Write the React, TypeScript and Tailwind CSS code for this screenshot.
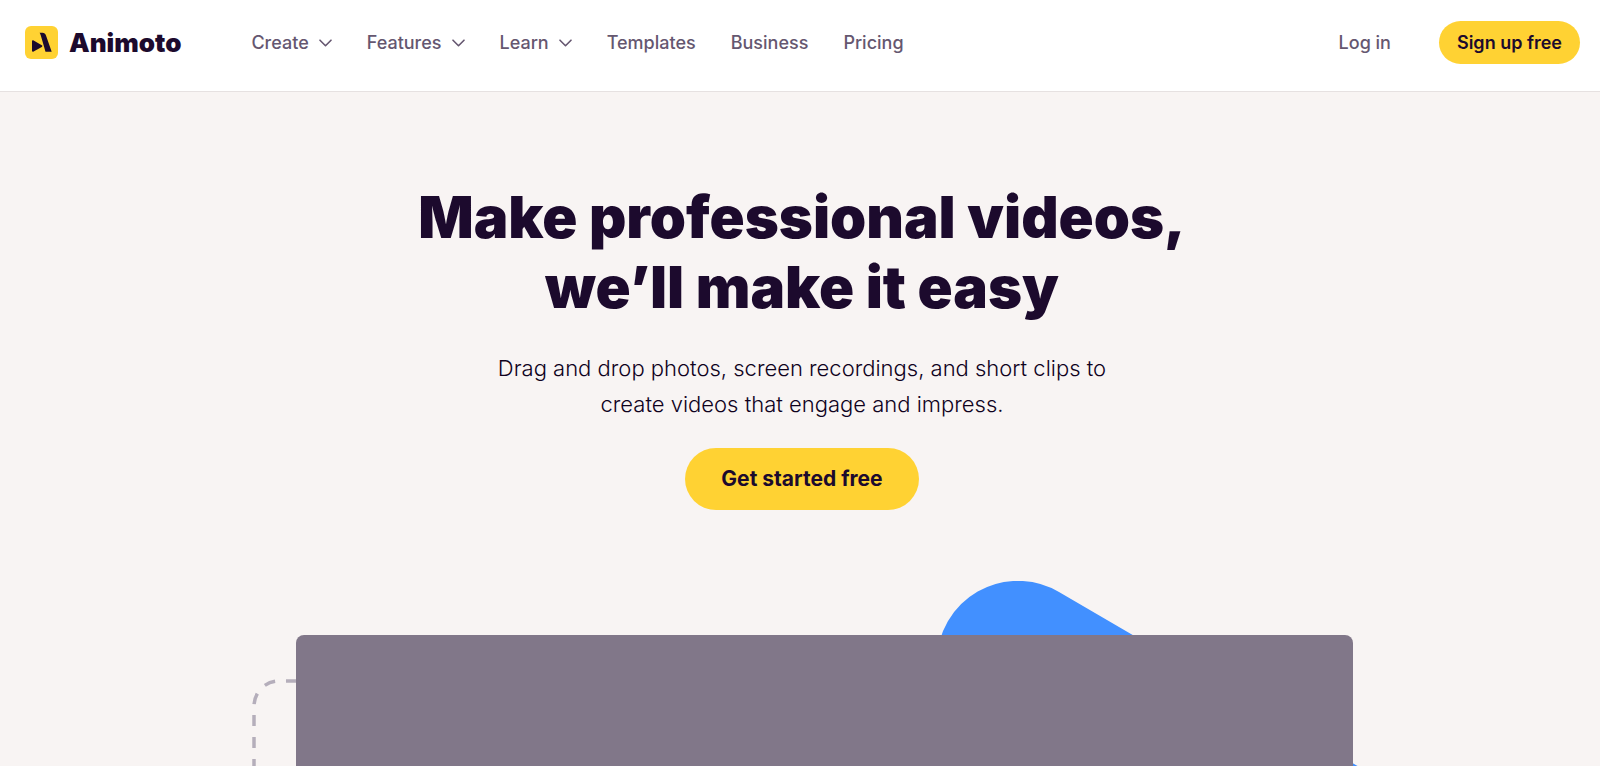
const navItems = [
  { label: "Create", menu: true },
  { label: "Features", menu: true },
  { label: "Learn", menu: true },
  { label: "Templates", menu: false },
  { label: "Business", menu: false },
  { label: "Pricing", menu: false },
];

function Logo() {
  return (
    <a href="#" className="flex items-center gap-[11px]">
      <svg viewBox="0 0 33 33" className="h-[33px] w-[33px]" aria-hidden>
        <rect width="33" height="33" rx="6" fill="#ffd233" />
        <path
          d="M7 15.4c0-1 .8-1.4 1.6-.9l8.2 4.8c.7.4.7 1.2 0 1.6l-8.2 4.7c-.8.5-1.6.1-1.6-.8z"
          fill="#1c0a2d"
        />
        <path d="M14.6 6.8h2.9c1.7 0 2.9.9 3.4 2.4l5.8 16.6h-6.2L16.1 10.4c-.5-1.6-.8-2.4-1.5-3.6z" fill="#1c0a2d" />
      </svg>
      <span className="text-[26px] leading-8 font-black text-[#1c0a2d]">Animoto</span>
    </a>
  );
}

function Chevron() {
  return (
    <svg viewBox="0 0 13 8" className="h-2 w-[13px]" fill="none" aria-hidden>
      <path d="M1 1.2l5.5 5.5L12 1.2" stroke="currentColor" strokeWidth="1.6" strokeLinecap="round" strokeLinejoin="round" />
    </svg>
  );
}

function Header() {
  return (
    <header className="flex h-[92px] items-start justify-between border-b border-[#e6e1e1] bg-white pt-[21px] pr-5 pl-[25px]">
      <div className="flex h-[43px] items-center gap-[70px]">
        <Logo />
        <nav className="flex items-center gap-[35px] text-lg font-medium text-[#655770]">
          {navItems.map((item) =>
            item.menu ? (
              <button key={item.label} className="flex items-center gap-[10px]">
                {item.label}
                <Chevron />
              </button>
            ) : (
              <a key={item.label} href="#">
                {item.label}
              </a>
            )
          )}
        </nav>
      </div>
      <div className="flex items-center gap-12 text-lg">
        <a href="#" className="font-medium text-[#655770]">
          Log in
        </a>
        <button className="h-[43px] rounded-full bg-[#ffd233] px-[18px] font-semibold text-[#1c0a2d]">
          Sign up free
        </button>
      </div>
    </header>
  );
}

/** Video placeholder with the decorative shapes sitting behind it. */
function VideoStage() {
  return (
    <div className="relative ml-12 flex w-full max-w-[1057px] flex-1">
      <svg
        viewBox="0 0 46 132"
        className="absolute top-[43px] -left-[45px] h-[132px] w-[46px]"
        fill="none"
        aria-hidden
      >
        <path
          d="M3 92V28A25 25 0 0 1 28 3H46"
          stroke="#b5aebb"
          strokeWidth="3.5"
          strokeDasharray="11 11"
        />
      </svg>
      <svg
        viewBox="0 0 460 240"
        className="absolute -top-[54px] left-[641px] h-[240px] w-[460px]"
        aria-hidden
      >
        <path d="M0 81A81 81 0 0 1 122 11L460 208V240H0Z" fill="#4290ff" />
      </svg>
      <div className="relative flex-1 rounded-t-lg bg-[#817789]" />
    </div>
  );
}

export default function App() {
  return (
    <div className="flex min-h-screen flex-col bg-[#f8f4f3] font-['Inter',sans-serif]">
      <Header />
      <main className="flex flex-1 flex-col items-center overflow-hidden pt-[90px]">
        <div className="flex flex-col items-center pl-1 text-center text-[#1c0a2d]">
          <h1 className="text-[58px] leading-[70px] font-black">
            Make professional videos,
            <br />
            we’ll make it easy
          </h1>
          <p className="mt-7 text-[22px] leading-9 font-light text-[#0f021d]">
            Drag and drop photos, screen recordings, and short clips to
            <br />
            create videos that engage and impress.
          </p>
        </div>
        <button className="mt-[26px] mb-[125px] ml-1 h-[62px] rounded-full bg-[#ffd233] px-9 text-[21px] font-bold text-[#1c0a2d]">
          Get started free
        </button>
        <VideoStage />
      </main>
    </div>
  );
}
